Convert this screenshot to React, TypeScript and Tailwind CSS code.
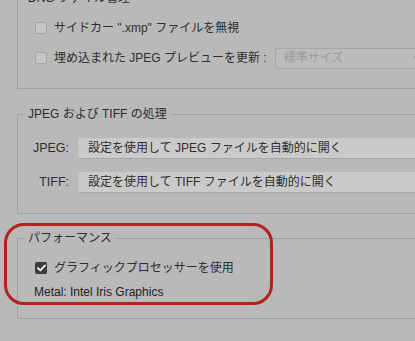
import React from "react";

const font = {
  fontFamily: '"Liberation Sans", "Noto Sans CJK JP", sans-serif',
};

function Box({ checked }: { checked?: boolean }) {
  if (checked) {
    return (
      <span className="w-[12px] h-[12px] rounded-[2px] bg-[#3b3b3b] grid place-items-center shrink-0">
        <svg width="9" height="8" viewBox="0 0 9 8">
          <path d="M1 4.2 L3.4 6.4 L8 1.4" fill="none" stroke="#f2f2f2" strokeWidth="1.9" strokeLinecap="round" strokeLinejoin="round" />
        </svg>
      </span>
    );
  }
  return (
    <span className="w-[12px] h-[12px] rounded-[2px] bg-[#c6c6c6] border border-[#a6a6a6] shrink-0" />
  );
}

function Group({
  title,
  className,
  children,
}: {
  title: string;
  className?: string;
  children: React.ReactNode;
}) {
  return (
    <fieldset
      className={[
        "border border-[#a2a2a2] w-[420px] p-0",
        className ?? "",
      ].join(" ")}
    >
      <legend className="ml-[7px] px-[3px] text-[12px] leading-[15px] text-[#2e2e2e]">
        {title}
      </legend>
      {children}
    </fieldset>
  );
}

export default function App() {
  return (
    <div
      className="relative w-[415px] h-[341px] overflow-hidden bg-[#b9b9b9] pl-[17px] text-[#2e2e2e]"
      style={font}
    >
      <Group title="DNG ファイル管理" className="mt-[-9px] h-[98px]">
        <div className="flex flex-col gap-[18px] pt-[16px] pl-[17px] text-[12px]">
          <label className="flex items-center gap-[7px] h-[12px]">
            <Box />
            <span>サイドカー ".xmp" ファイルを無視</span>
          </label>
          <div className="flex items-center h-[12px]">
            <Box />
            <span className="ml-[7px]">埋め込まれた JPEG プレビューを更新 :</span>
            <div className="ml-[8px] h-[21px] flex-1 border border-[#a6a6a6] rounded-[2px] bg-[#bcbcbc] flex items-center justify-between px-[8px]">
              <span className="text-[#9c9c9c]">標準サイズ</span>
              <svg width="8" height="6" viewBox="0 0 8 6" className="mr-[6px]">
                <path d="M1 1.5 L4 4.5 L7 1.5" fill="none" stroke="#8e8e8e" strokeWidth="1.2" />
              </svg>
            </div>
          </div>
        </div>
      </Group>

      <Group title="JPEG および TIFF の処理" className="mt-[18px] h-[107px]">
        <div className="flex flex-col gap-[13px] pt-[16px] text-[12px]">
          {[
            ["JPEG:", "設定を使用して JPEG ファイルを自動的に開く"],
            ["TIFF:", "設定を使用して TIFF ファイルを自動的に開く"],
          ].map(([k, v]) => (
            <div key={k} className="flex items-center">
              <span className="w-[51px] text-right text-[12.5px]">{k}</span>
              <div className="ml-[9px] flex-1 h-[21px] bg-[#cacaca] border-b border-[#a8a8a8] border-l border-l-[#c0c0c0] rounded-l-[2px] flex items-center pl-[9px]">
                {v}
              </div>
            </div>
          ))}
        </div>
      </Group>

      <Group title="パフォーマンス" className="mt-[17px] h-[88px]">
        <div className="flex flex-col pt-[16px] pl-[17px]">
          <label className="flex items-center gap-[7px] h-[12px] text-[12px]">
            <Box checked />
            <span>グラフィックプロセッサーを使用</span>
          </label>
          <div className="mt-[12px] -ml-[1px] text-[12px] leading-[13px] text-[#222]">
            Metal: Intel Iris Graphics
          </div>
        </div>
      </Group>

      <div className="absolute left-[4px] top-[223px] w-[269px] h-[82px] border-[3px] border-[#b3231c] rounded-[20px]" />
    </div>
  );
}
